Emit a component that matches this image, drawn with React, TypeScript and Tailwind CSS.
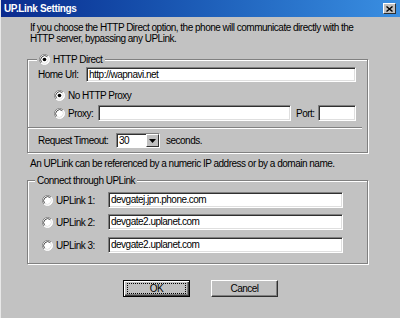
import React from "react";

function Radio({ checked = false }: { checked?: boolean }) {
  return (
    <svg width="11" height="11" viewBox="0 0 12 12" className="shrink-0">
      <circle cx="6" cy="6" r="5.5" fill="#ffffff" />
      <path d="M2.1 9.9 A5.5 5.5 0 0 1 9.9 2.1" stroke="#808080" strokeWidth="1" fill="none" />
      <path d="M2.9 9.1 A4.4 4.4 0 0 1 9.1 2.9" stroke="#404040" strokeWidth="1" fill="none" />
      <path d="M9.9 2.1 A5.5 5.5 0 0 1 2.1 9.9" stroke="#ffffff" strokeWidth="1" fill="none" />
      <path d="M9.1 2.9 A4.4 4.4 0 0 1 2.9 9.1" stroke="#dfdfdf" strokeWidth="1" fill="none" />
      {checked && <circle cx="6" cy="6" r="2" fill="#000000" />}
    </svg>
  );
}

function Field({ value, className }: { value?: string; className: string }) {
  return (
    <div
      className={
        "shrink-0 bg-white border border-t-[#808080] border-l-[#808080] border-b-white border-r-white shadow-[inset_1px_1px_0_#303030,inset_-1px_-1px_0_#dfdfdf] flex items-center pl-[2px] overflow-hidden whitespace-nowrap leading-none text-black " +
        className
      }
    >
      {value}
    </div>
  );
}

function Button({ label, def = false }: { label: string; def?: boolean }) {
  return (
    <div
      className={
        "w-[67px] h-[17px] bg-[#c0c0c0] flex items-center justify-center leading-none " +
        (def
          ? "border border-black shadow-[inset_1px_1px_0_#fff,inset_-1px_-1px_0_#404040,inset_-2px_-2px_0_#808080]"
          : "border border-t-white border-l-white border-b-[#303030] border-r-[#303030] shadow-[inset_-1px_-1px_0_#808080]")
      }
    >
      {def ? (
        <div className="w-[59px] h-[11px] border border-dotted border-black flex items-center justify-center">
          {label}
        </div>
      ) : (
        label
      )}
    </div>
  );
}

export default function App() {
  return (
    <div className="w-[400px] h-[318px] bg-[#c2c2c2] overflow-hidden flex flex-col border-l border-[#e8e8e8] text-black font-['Liberation_Sans',Arial,sans-serif] text-[10px] tracking-[-0.5px]">
      {/* Title bar */}
      <div className="h-[17px] shrink-0 flex items-center justify-between bg-gradient-to-r from-[#0b2a8e] to-[#3a8fe2] pl-[3px] pr-[4px]">
        <span className="text-white font-bold text-[10px] leading-none tracking-[-0.35px]">UP.Link Settings</span>
        <div className="w-[13px] h-[11px] bg-[#c0c0c0] border border-t-white border-l-white border-b-[#303030] border-r-[#303030] flex items-center justify-center">
          <svg width="7" height="6" viewBox="0 0 7 6">
            <path d="M0.5 0.5 L6.5 5.5 M6.5 0.5 L0.5 5.5" stroke="#000" strokeWidth="1.4" />
          </svg>
        </div>
      </div>

      {/* Body */}
      <div className="flex flex-col pl-[26px] w-[367px]">
        <p className="mt-[5px] pl-[3px] leading-[11px] whitespace-nowrap">
          If you choose the HTTP Direct option, the phone will communicate directly with the
          <br />
          HTTP server, bypassing any UPLink.
        </p>

        {/* Group 1 */}
        <div className="relative mt-[15px] border border-[#808080] shadow-[inset_1px_1px_0_#fff,1px_1px_0_#fff] pt-[7px] pb-[4px]">
          <div className="absolute -top-[6px] left-[9px] bg-[#c2c2c2] flex items-center gap-[3px] pl-[2px] pr-[3px] h-[11px] leading-none whitespace-nowrap">
            <Radio checked />
            <span>HTTP Direct</span>
          </div>

          <div className="flex items-center h-[15px] pl-[10px] whitespace-nowrap">
            <span className="w-[48px] shrink-0">Home Url:</span>
            <Field value="http://wapnavi.net" className="w-[270px] h-[15px]" />
          </div>

          <div className="flex items-center h-[13px] mt-[7px] pl-[26px] gap-[3px] whitespace-nowrap">
            <Radio checked />
            <span>No HTTP Proxy</span>
          </div>

          <div className="flex items-center h-[16px] mt-[3px] pl-[26px] whitespace-nowrap">
            <Radio />
            <span className="ml-[3px] w-[30px] shrink-0">Proxy:</span>
            <Field className="w-[193px] h-[16px]" />
            <span className="ml-[5px] w-[22px] shrink-0">Port:</span>
            <Field className="w-[38px] h-[16px]" />
          </div>

          <div className="mt-[6px] mr-[5px] h-[2px] border-t border-[#808080] border-b border-b-white" />

          <div className="flex items-center h-[15px] mt-[4px] pl-[10px] whitespace-nowrap">
            <span className="w-[78px] shrink-0">Request Timeout:</span>
            <div className="shrink-0 w-[44px] h-[15px] bg-white border border-t-[#808080] border-l-[#808080] border-b-white border-r-white shadow-[inset_1px_1px_0_#303030] flex items-center justify-between">
              <span className="pl-[2px] leading-none">30</span>
              <div className="w-[13px] h-[13px] bg-[#c0c0c0] border border-t-white border-l-white border-b-[#303030] border-r-[#303030] flex items-center justify-center">
                <svg width="7" height="4" viewBox="0 0 7 4">
                  <path d="M0 0 H7 L3.5 4 Z" fill="#000" />
                </svg>
              </div>
            </div>
            <span className="ml-[6px]">seconds.</span>
          </div>
        </div>

        <p className="mt-[5px] pl-[3px] leading-[11px] whitespace-nowrap">
          An UPLink can be referenced by a numeric IP address or by a domain name.
        </p>

        {/* Group 2 */}
        <div className="relative mt-[11px] border border-[#808080] shadow-[inset_1px_1px_0_#fff,1px_1px_0_#fff] pt-[11px] pb-[10px] flex flex-col">
          <div className="absolute -top-[6px] left-[7px] bg-[#c2c2c2] h-[11px] leading-[11px] px-[2px] whitespace-nowrap">
            Connect through UPLink
          </div>
          {[
            { n: "1", v: "devgatej.jpn.phone.com", mt: "" },
            { n: "2", v: "devgate2.uplanet.com", mt: "mt-[6px]" },
            { n: "3", v: "devgate2.uplanet.com", mt: "mt-[7px]" },
          ].map((r) => (
            <div key={r.n} className={"flex items-center h-[16px] pl-[14px] whitespace-nowrap " + r.mt}>
              <Radio />
              <span className="ml-[3px] w-[52px] shrink-0">UPLink {r.n}:</span>
              <Field value={r.v} className="w-[235px] h-[16px]" />
            </div>
          ))}
        </div>

        <div className="flex mt-[16px] ml-[96px] gap-[21px]">
          <Button label="OK" def />
          <Button label="Cancel" />
        </div>
      </div>
    </div>
  );
}
